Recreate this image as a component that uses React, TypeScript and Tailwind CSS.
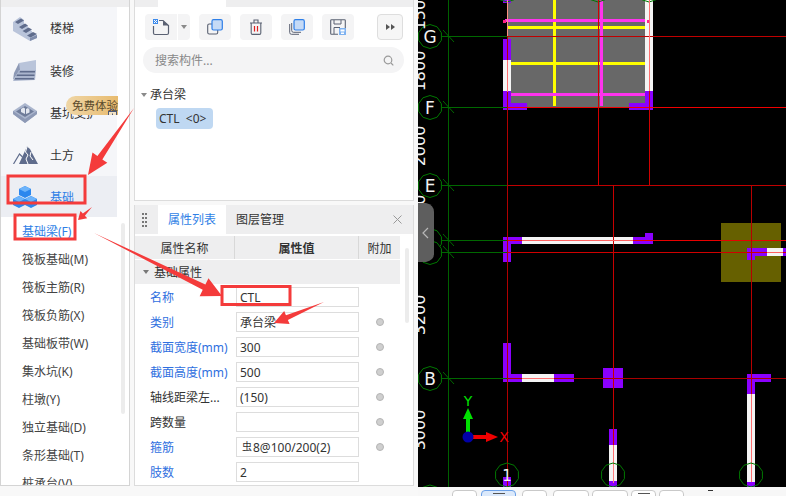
import React from "react";

const subItems = [
  "基础梁(F)",
  "筏板基础(M)",
  "筏板主筋(R)",
  "筏板负筋(X)",
  "基础板带(W)",
  "集水坑(K)",
  "柱墩(Y)",
  "独立基础(D)",
  "条形基础(T)",
  "桩承台(V)",
];

const props = [
  { name: "名称", value: "CTL", blue: true, dot: false },
  { name: "类别", value: "承台梁", blue: true, dot: true },
  { name: "截面宽度(mm)", value: "300", blue: true, dot: true },
  { name: "截面高度(mm)", value: "500", blue: true, dot: true },
  { name: "轴线距梁左...", value: "(150)", blue: false, dot: true },
  { name: "跨数量", value: "", blue: false, dot: true },
  { name: "箍筋", value: "8@100/200(2)", blue: true, dot: true, rebar: true },
  { name: "肢数", value: "2", blue: true, dot: false },
];

function StairsIcon() {
  return (
    <svg width="24" height="24" viewBox="0 0 24 24">
      <path d="M0 5 L7 0 L11 3 V7 L15 9 V12 L19 14 V16 L24 18 V21 L17 24 L0 14 Z" fill="#b9c4da" />
      <path d="M2 5 L8 1.5 L11 3.5 L5 7 Z M6 10 L12 6.5 L15 8.5 L9 12 Z M9.5 14 L15.5 10.5 L19 12.5 L13 16 Z M14 18.5 L20 15 L24 17 L17.5 20.5 Z" fill="#5f6c8c" />
      <path d="M17 21 L24 18 V21 L17 24 Z" fill="#7f8cab" />
    </svg>
  );
}

function FinishIcon() {
  return (
    <svg width="24" height="22" viewBox="0 0 24 22">
      <path d="M6 3 L23 0 L23 11 L2 13 Z" fill="#b9c4da" />
      <path d="M0 20 L1 13 L6 3 L7 10 Z" fill="#8d99b5" />
      <path d="M6 10 L23 10 L22 20 L0 21 Z" fill="#aab5cd" />
      <path d="M7 11 H22 V12.5 H6.5 Z M4 14.5 H21.5 V16 H3.5 Z M2 18 H21 V19.5 H1.5 Z" fill="#5f6c8c" />
    </svg>
  );
}

function PitIcon() {
  return (
    <svg width="24" height="20" viewBox="0 0 24 20">
      <path d="M12 0 L24 8 L24 11 L12 20 L0 11 L0 8 Z" fill="#aab5cd" />
      <path d="M0 8 L12 16 L24 8 L24 11 L12 20 L0 11 Z" fill="#8d99b5" />
      <path d="M12 3 L21 8.5 L12 14 L3 8.5 Z" fill="#6f7c9a" />
      <path d="M8 6 L10.5 4.5 L12 5.5 V11 L8 9 Z M13 6 L15 5 L16.5 6.5 V9.5 L13 11 Z" fill="#e3e7f0" />
    </svg>
  );
}

function EarthIcon() {
  return (
    <svg width="25" height="18" viewBox="0 0 25 18" fill="none">
      <path d="M0.5 18 L6.5 8 L9.5 11" stroke="#5f6c8c" strokeWidth="1.2" />
      <path d="M6 18 L14 0.5 L17 3 L19 7 L25 18 Z" fill="#5f6c8c" />
      <path d="M14 1 L12.5 6 L15 9 L13 13 L15 18 M18 6 L17 10 L20 14" stroke="#fff" strokeWidth="1" />
    </svg>
  );
}

function CubesIcon() {
  return (
    <svg width="24" height="22" viewBox="0 0 24 22">
      <path d="M12 0 L18 3 V9 L12 12 L6 9 V3 Z" fill="#2b87ee" />
      <path d="M12 0 L18 3 L12 6 L6 3 Z" fill="#6db4fb" />
      <path d="M6 10 L12 13 V19 L6 22 L0 19 V13 Z" fill="#2b87ee" />
      <path d="M6 10 L12 13 L6 16 L0 13 Z" fill="#6db4fb" />
      <path d="M18 10 L24 13 V19 L18 22 L12 19 V13 Z" fill="#2b87ee" />
      <path d="M18 10 L24 13 L18 16 L12 13 Z" fill="#6db4fb" />
    </svg>
  );
}

function NewIcon() {
  return (
    <svg width="18" height="18" viewBox="0 0 18 18" fill="none">
      <path d="M7 2.5 H11 L16.5 7.5 V15 Q16.5 16.5 15 16.5 H3 Q1.5 16.5 1.5 15 V8" stroke="#5a6172" strokeWidth="1.2" />
      <path d="M11 2.5 V7.5 H16.5" fill="#5a6172" />
      <rect x="1" y="1" width="5" height="5" fill="#3d8bec" />
      <path d="M2 2h1v1H2zM4 2h1v1H4zM3 3h1v1H3zM2 4h1v1H2zM4 4h1v1H4z" fill="#fff" />
    </svg>
  );
}

function CopyIcon() {
  return (
    <svg width="16" height="16" viewBox="0 0 16 16" fill="none">
      <rect x="0.7" y="5" width="10" height="10" rx="1.5" stroke="#5a6172" strokeWidth="1.1" />
      <rect x="5" y="0.7" width="10.3" height="10.3" rx="1.5" fill="#c5daf6" stroke="#2e7fe8" strokeWidth="1.2" />
    </svg>
  );
}

function TrashIcon() {
  return (
    <svg width="14" height="16" viewBox="0 0 14 16" fill="none">
      <path d="M1 4 H13 M5 4 V1 H9 V4 M2.2 4 V14 Q2.2 15.4 3.5 15.4 H10.5 Q11.8 15.4 11.8 14 V4" stroke="#5a6172" strokeWidth="1.1" />
      <path d="M5.5 7 V12.5 M8.5 7 V12.5" stroke="#e01f1f" strokeWidth="1.2" />
    </svg>
  );
}

function StackIcon() {
  return (
    <svg width="16" height="16" viewBox="0 0 16 16" fill="none">
      <path d="M0.7 5 V13.5 Q0.7 15.3 2.5 15.3 H10" stroke="#5a6172" strokeWidth="1" />
      <path d="M2.7 4 V11.5 Q2.7 13.3 4.5 13.3 H12" stroke="#5a6172" strokeWidth="1" />
      <rect x="5" y="0.7" width="10.3" height="10.3" rx="1.5" fill="#c5daf6" stroke="#2e7fe8" strokeWidth="1.2" />
    </svg>
  );
}

function SaveIcon() {
  return (
    <svg width="16" height="16" viewBox="0 0 16 16" fill="none">
      <path d="M8 15.3 H1.5 Q0.7 15.3 0.7 14.5 V1.5 Q0.7 0.7 1.5 0.7 H14.5 Q15.3 0.7 15.3 1.5 V9" stroke="#5a6172" strokeWidth="1.1" />
      <path d="M4 1 V5 H11 V1 M4 15 V8.5 H10" stroke="#5a6172" strokeWidth="1" />
      <rect x="9" y="9" width="7" height="7" fill="#7fb2f0" />
      <rect x="10.5" y="10.5" width="4" height="2" fill="#fff" />
      <rect x="11" y="13.5" width="3" height="1.5" fill="#fff" />
    </svg>
  );
}

function ToolBtn({ children }: { children: React.ReactNode }) {
  return <div className="w-8 h-[26px] rounded bg-[#f4f4f5] flex items-center justify-center">{children}</div>;
}

function Sidebar() {
  const items = [
    { label: "楼梯", icon: <StairsIcon />, h: "h-[43px]" },
    { label: "装修", icon: <FinishIcon />, h: "h-[42px]" },
    { label: "基坑支护", icon: <PitIcon />, h: "h-[42px]" },
    { label: "土方", icon: <EarthIcon />, h: "h-[42px]" },
  ];
  return (
    <div className="w-[130px] h-[486px] shrink-0 border-l border-r border-b border-[#d4d4d4] bg-white overflow-hidden flex flex-col">
      <div className="h-[7px] shrink-0 bg-[#eeeeef]" />
      <div className="w-[116px] shrink-0 bg-[#f5f6f9] relative">
        {items.map((it) => (
          <div key={it.label} className={`${it.h} flex items-center text-xs text-[#333]`}>
            <div className="w-[49px] pl-3 flex justify-start">{it.icon}</div>
            <span className="pt-px">{it.label}</span>
          </div>
        ))}
        <div className="h-[41px] bg-[#eceef3] flex items-center text-xs text-[#2f7fe6]">
          <div className="w-[49px] pl-3 flex justify-start">
            <CubesIcon />
          </div>
          <span className="pt-[2px]">基础</span>
        </div>
        <div className="absolute left-[65px] top-[89px] w-[52px] h-[19px] rounded-l-full bg-gradient-to-r from-[#efd6a6] to-[#e8bb6e] text-[11.5px] leading-[19px] text-[#5b4a2c] pl-[6px] whitespace-nowrap overflow-hidden">
          免费体验
          <svg className="absolute right-px top-[12px]" width="9" height="10" viewBox="0 0 9 10" fill="none">
            <rect x="0.5" y="3.5" width="8" height="6" fill="#f3e3c4" stroke="#4c5a78" />
            <path d="M2.5 3.5 V2 Q4.5 0 6.5 2 V3.5" stroke="#4c5a78" />
            <rect x="4" y="5.5" width="1" height="2" fill="#4c5a78" />
          </svg>
        </div>
      </div>
      <div className="relative flex-1 pt-px">
        <div className="absolute left-[120px] top-[6px] w-1 h-[191px] rounded bg-[#ececec]" />
        {subItems.map((s, i) => (
          <div key={s} className={`h-7 pl-[21px] text-xs leading-[28px] ${i === 0 ? "text-[#2f7fe6]" : "text-[#444]"}`}>
            {s}
          </div>
        ))}
      </div>
    </div>
  );
}

function TopPanel() {
  return (
    <div className="h-[201px] border-l border-r border-b border-[#dcdcdc] bg-white">
      <div className="h-[7px] bg-[#eeeeef] pl-[23px]">
        <div className="w-[68px] h-[7px] bg-white" />
      </div>
      <div className="pt-[7px] pl-[10px] flex items-center">
        <div className="w-8 h-[26px] rounded-l bg-[#f4f4f5] flex items-center justify-center">
          <NewIcon />
        </div>
        <div className="ml-px w-3 h-[26px] rounded-r bg-[#f4f4f5] flex items-center justify-center">
          <div className="w-0 h-0 border-x-[3px] border-x-transparent border-t-[4px] border-t-[#8a8a8a]" />
        </div>
        <div className="ml-[9px] flex gap-[9px]">
          <ToolBtn><CopyIcon /></ToolBtn>
          <ToolBtn><TrashIcon /></ToolBtn>
          <ToolBtn><StackIcon /></ToolBtn>
          <ToolBtn><SaveIcon /></ToolBtn>
        </div>
        <div className="ml-[23px] w-[26px] h-[26px] rounded border border-[#dedede] bg-[#f6f6f6] flex items-center justify-center gap-px">
          <div className="w-0 h-0 border-y-[3px] border-y-transparent border-l-[4px] border-l-[#555]" />
          <div className="w-0 h-0 border-y-[3px] border-y-transparent border-l-[4px] border-l-[#555]" />
        </div>
      </div>
      <div className="mt-[7px] ml-2 w-[261px] h-[26px] rounded-full bg-[#f4f4f5] flex items-center justify-between pl-3 pr-[10px] text-xs text-[#888]">
        <span className="pt-px">搜索构件...</span>
        <svg width="11" height="11" viewBox="0 0 11 11" fill="none" stroke="#9a9a9a" strokeWidth="1.2">
          <circle cx="5" cy="5" r="3.8" />
          <path d="M8 8 L10.3 10.3" />
        </svg>
      </div>
      <div className="mt-[13px] ml-[6px] flex items-center text-xs text-[#333] h-[18px]">
        <div className="w-0 h-0 border-x-[3px] border-x-transparent border-t-[4px] border-t-[#8a8a8a] mr-[3px]" />
        <span>承台梁</span>
      </div>
      <div className="mt-[4px] ml-[21px] w-[57px] h-[21px] rounded-sm bg-[#bfd8f2] text-xs leading-[21px] pl-[3px] text-[#333] whitespace-pre">
        {"CTL  <0>"}
      </div>
    </div>
  );
}

function PropsPanel() {
  return (
    <div className="mt-1 h-[281px] border-l border-r border-b border-[#dcdcdc] bg-white relative overflow-hidden">
      <div className="h-[29px] bg-[#eeeeef] flex items-center text-xs">
        <div className="w-[23px] pl-[7px]">
          <div className="w-[6px] grid grid-cols-2 gap-y-[2px]">
            {[0, 1, 2, 3, 4, 5, 6, 7].map((d) => (
              <div key={d} className="w-[2px] h-[2px] bg-[#777]" />
            ))}
          </div>
        </div>
        <div className="w-[68px] h-[29px] pt-px bg-white text-[#2f7fe6] flex items-center justify-center">属性列表</div>
        <div className="ml-[10px] pt-px text-[#333]">图层管理</div>
        <svg className="ml-[109px]" width="9" height="9" viewBox="0 0 9 9" stroke="#999" strokeWidth="1">
          <path d="M0.5 0.5 L8.5 8.5 M8.5 0.5 L0.5 8.5" />
        </svg>
      </div>
      <div className="mt-[2px] w-[265px] h-[23px] bg-[#eeeeef] flex text-xs text-[#333] leading-[25px] text-center">
        <div className="w-[100px] border-r border-[#d8d8d8]">属性名称</div>
        <div className="w-[124px] border-r border-[#d8d8d8] font-bold">属性值</div>
        <div className="w-[41px]">附加</div>
      </div>
      <div className="mt-px w-[265px] h-[24px] bg-[#eeeeef] flex items-center text-xs text-[#333] pl-[8px]">
        <div className="w-0 h-0 border-x-[3px] border-x-transparent border-t-[4px] border-t-[#777] mr-[5px]" />
        <span className="pt-px">基础属性</span>
      </div>
      <div className="absolute left-[270px] top-[43px] w-1 h-[75px] rounded bg-[#ececec]" />
      <div className="pt-[3px] flex flex-col gap-[5px]">
        {props.map((p) => (
          <div key={p.name} className="flex items-center h-5 text-xs">
            <div className={`w-[101px] pl-[15px] pt-px whitespace-nowrap ${p.blue ? "text-[#2f6fe0]" : "text-[#333]"}`}>{p.name}</div>
            <div className="w-[123px] h-5 border border-[#dddddd] pl-[3px] leading-[20px] text-[#333] whitespace-nowrap">
              {p.rebar && <span className="text-[10px] relative -top-[2px] ml-[2px] mr-px">虫</span>}
              {p.value}
            </div>
            {p.dot && <div className="ml-[17px] w-2 h-2 rounded-full bg-[#cfcfcf] border border-[#b5b5b5]" />}
          </div>
        ))}
      </div>
    </div>
  );
}

function bubblePts(cx: number, cy: number, r: number) {
  const pts: string[] = [];
  for (let i = 0; i < 10; i++) {
    const a = (Math.PI * 2 * i) / 10 + Math.PI / 10;
    pts.push(`${cx + r * Math.cos(a)},${cy + r * Math.sin(a)}`);
  }
  return pts.join(" ");
}

const PURPLE = "#8b00ff";

function Canvas() {
  const rows = [
    { y: 36, label: "G", color: "#c00000" },
    { y: 107, label: "F", color: "#f00000" },
    { y: 185, label: "E", color: "#c00000" },
    { y: 240, label: "", color: "#e80000" },
    { y: 252, label: "", color: "#d00000" },
    { y: 378, label: "B", color: "#a80000" },
  ];
  const dims = [
    { y: 10, t: "1500" },
    { y: 71, t: "1800" },
    { y: 146, t: "2000" },
    { y: 215, t: "1500" },
    { y: 315, t: "3200" },
    { y: 430, t: "3000" },
  ];
  // everything below uses page coordinates, the viewBox starts at the canvas' left edge
  return (
    <svg className="block" width="368" height="487" viewBox="418 0 368 487">
      <rect x="418" y="0" width="368" height="487" fill="#000" />
      <rect x="448" y="0" width="1" height="487" fill="#006000" />

      <rect x="507" y="0" width="142" height="107" fill="#686868" />
      <rect x="553" y="0" width="3" height="106" fill="#ffff00" />
      <rect x="507" y="26" width="141" height="3" fill="#ffff00" />
      <rect x="507" y="62" width="141" height="3" fill="#ffff00" />
      <rect x="505" y="19" width="145" height="3" fill="#ff33ee" />
      <rect x="507" y="93" width="142" height="3" fill="#ff33ee" />
      <rect x="600" y="0" width="3" height="106" fill="#ff33ee" />

      {/* walls */}
      <rect x="645" y="0" width="8" height="91" fill="#f4f4f4" />
      <rect x="503" y="60" width="8" height="32" fill="#f4f4f4" />
      <rect x="503" y="0" width="8" height="3" fill={PURPLE} />
      <rect x="503" y="39" width="8" height="21" fill={PURPLE} />
      <path d="M503 91 H511 V103 H527 V110 H503 Z" fill={PURPLE} />
      <path d="M645 91 H653 V110 H629 V103 H645 Z" fill={PURPLE} />
      <rect x="503" y="20" width="3" height="3" fill="#ff2288" />
      <rect x="647" y="20" width="3" height="3" fill="#ff2288" />

      <rect x="721" y="223" width="60" height="59" fill="#666000" />

      <path d="M503 237 H522 V244 H511 V262 H503 Z" fill={PURPLE} />
      <rect x="522" y="237" width="111" height="7" fill="#f4f4f4" />
      <path d="M633 237 H645 V233 H653 V244 H633 Z" fill={PURPLE} />
      <path d="M747 248 H767 V256 H755 V260 H747 Z" fill={PURPLE} />
      <rect x="767" y="248" width="16" height="8" fill="#f4f4f4" />
      <rect x="783" y="248" width="3" height="8" fill={PURPLE} />

      <path d="M503 343 H511 V374 H522 V382 H503 Z" fill={PURPLE} />
      <rect x="522" y="374" width="32" height="8" fill="#f4f4f4" />
      <rect x="554" y="374" width="20" height="8" fill={PURPLE} />
      <rect x="603" y="368" width="20" height="20" fill={PURPLE} />
      <path d="M747 374 H771 V382 H755 V394 H747 Z" fill={PURPLE} />
      <rect x="747" y="394" width="8" height="88" fill="#f4f4f4" />
      <rect x="747" y="482" width="8" height="5" fill={PURPLE} />
      <rect x="609" y="429" width="8" height="16" fill={PURPLE} />
      <rect x="609" y="445" width="8" height="36" fill="#f4f4f4" />
      <rect x="609" y="481" width="8" height="6" fill={PURPLE} />
      <rect x="503" y="477" width="8" height="10" fill={PURPLE} />

      {/* axis lines */}
      {rows.map((r) => (
        <g key={r.y}>
          <rect x="442" y={r.y} width="65" height="1" fill="#006800" />
          <rect x="507" y={r.y} width="279" height="1" fill={r.color} />
          <path d={`M443 ${r.y - 6} L454 ${r.y + 6}`} stroke="#006800" strokeWidth="1" />
          <polygon points={bubblePts(430, r.y + 0.5, 12)} fill="#000" stroke="#007800" strokeWidth="1" />
          <text x="430" y={r.y + 7} textAnchor="middle" fontSize="17" fill="#f2f2f2" fontFamily="DejaVu Sans, sans-serif">
            {r.label}
          </text>
        </g>
      ))}
      <polygon points={bubblePts(430, 497, 12)} fill="none" stroke="#007800" />
      <polygon points={bubblePts(507, -10, 12)} fill="none" stroke="#007800" />
      <polygon points={bubblePts(598, -10, 12)} fill="none" stroke="#007800" />
      <polygon points={bubblePts(649, -10, 12)} fill="none" stroke="#007800" />

      <rect x="507" y="0" width="1" height="487" fill="#b00000" />
      <rect x="598" y="0" width="1" height="185" fill="#d00000" />
      <rect x="649" y="0" width="1" height="185" fill="#d00000" />
      <rect x="613" y="185" width="1" height="280" fill="#c80000" />
      <rect x="751" y="185" width="1" height="280" fill="#b80000" />
      <rect x="613" y="465" width="1" height="18" fill="#ff8080" />
      <rect x="751" y="394" width="1" height="88" fill="#ff7070" />
      <rect x="613" y="445" width="1" height="20" fill="#ff7070" />
      <rect x="522" y="378" width="32" height="1" fill="#ff7070" />
      <rect x="522" y="240" width="111" height="1" fill="#ff6060" />
      <rect x="767" y="252" width="16" height="1" fill="#ff6060" />
      <rect x="507" y="0" width="1" height="36" fill="#ff9080" />
      <rect x="507" y="60" width="1" height="32" fill="#ff7070" />
      <rect x="649" y="0" width="1" height="91" fill="#ff7070" />

      {/* bottom axis bubbles */}
      {[507, 613, 751].map((x) => (
        <polygon key={x} points={bubblePts(x, 475, 12)} fill="none" stroke="#007800" />
      ))}
      <text x="507" y="481" textAnchor="middle" fontSize="15" fill="#f2f2f2" fontFamily="DejaVu Sans, sans-serif">
        1
      </text>

      {dims.map((d) => (
        <text
          key={d.y}
          transform={`translate(425 ${d.y}) rotate(-90)`}
          textAnchor="middle"
          fontSize="16"
          fill="#f2f2f2"
          fontFamily="DejaVu Sans, sans-serif"
        >
          {d.t}
        </text>
      ))}

      {/* coordinate axes */}
      <rect x="466" y="416" width="4" height="18" fill="#00e000" />
      <path d="M468 408 L473 419 H463 Z" fill="#00e000" />
      <rect x="472" y="435" width="15" height="4" fill="#f00000" />
      <path d="M498 437 L486 432 V442 Z" fill="#f00000" />
      <circle cx="468" cy="437" r="5.5" fill="#0000a8" />
      <text x="468" y="406" textAnchor="middle" fontSize="14" fill="#00e000" fontFamily="DejaVu Sans, sans-serif">Y</text>
      <text x="504" y="442" textAnchor="middle" fontSize="14" fill="#f00000" fontFamily="DejaVu Sans, sans-serif">X</text>

      {/* collapse handle */}
      <path d="M418 203 H426 Q434 205 434 212 V254 Q434 260 426 262 H418 Z" fill="#5e5e5e" />
      <path d="M428 228 L423 233 L428 238" fill="none" stroke="#b8b8b8" strokeWidth="1.2" />
    </svg>
  );
}

function BottomBar() {
  const btns = [
    { w: "w-[25px]", ml: "ml-[34px]", on: false },
    { w: "w-[35px]", ml: "ml-[4px]", on: true },
    { w: "w-[25px]", ml: "ml-[6px]", on: false },
    { w: "w-9", ml: "ml-[6px]", on: false },
    { w: "w-9", ml: "ml-[3px]", on: false },
    { w: "w-[25px]", ml: "ml-[3px]", on: false },
    { w: "w-[25px]", ml: "ml-[3px]", on: false },
  ];
  return (
    <div className="h-[9px] bg-[#f7f7f7] flex items-start overflow-hidden pt-[3px]">
      {btns.map((b, i) => (
        <div
          key={i}
          className={`${b.w} ${b.ml} h-6 shrink-0 rounded border flex justify-center pt-[2px] ${
            b.on ? "bg-[#dbe9fb] border-[#6aa0e8]" : "bg-white border-[#c9c9c9]"
          }`}
        >
          {(b.on || i === 5) && <div className="w-3 h-px bg-[#555]" />}
        </div>
      ))}
      <div className="ml-[24px] w-[5px] h-px bg-[#333]" />
    </div>
  );
}

function Annotations() {
  const arrow = (tail: number[], tip: number[], neck: number, inner: number, wing: number) => {
    const dx = tip[0] - tail[0];
    const dy = tip[1] - tail[1];
    const len = Math.hypot(dx, dy);
    const ux = dx / len;
    const uy = dy / len;
    const nx = -uy;
    const ny = ux;
    const bx = tip[0] - ux * neck;
    const by = tip[1] - uy * neck;
    return [
      [tail[0], tail[1]],
      [bx + nx * inner, by + ny * inner],
      [bx + nx * wing, by + ny * wing],
      [tip[0], tip[1]],
      [bx - nx * wing, by - ny * wing],
      [bx - nx * inner, by - ny * inner],
    ]
      .map((p) => p.join(","))
      .join(" ");
  };
  return (
    <svg className="absolute inset-0 pointer-events-none" width="786" height="496" viewBox="0 0 786 496">
      <g fill="none" stroke="#f43b3b" strokeWidth="3">
        <rect x="8" y="176" width="77" height="27" />
        <rect x="15" y="215" width="60" height="24" />
        <rect x="222" y="286.5" width="68" height="18" />
      </g>
      <g fill="#f43b3b">
        <polygon points={arrow([134, 108], [88, 175], 21, 3, 9)} />
        <polygon points={arrow([92, 207], [78, 220], 8, 1.5, 5)} />
        <polygon points={arrow([94, 233], [222, 296], 20, 3, 10)} />
        <polygon points={arrow([324, 302], [274, 323], 14, 2.5, 7)} />
      </g>
    </svg>
  );
}

export default function App() {
  return (
    <div className="relative w-[786px] h-[496px] overflow-hidden flex bg-[#f8f8f8] font-['Noto_Sans','Noto_Sans_CJK_SC',sans-serif]">
      <Sidebar />
      <div className="ml-1 w-[280px] shrink-0">
        <TopPanel />
        <PropsPanel />
      </div>
      <div className="ml-1 w-[368px] shrink-0">
        <Canvas />
        <BottomBar />
      </div>
      <Annotations />
    </div>
  );
}
